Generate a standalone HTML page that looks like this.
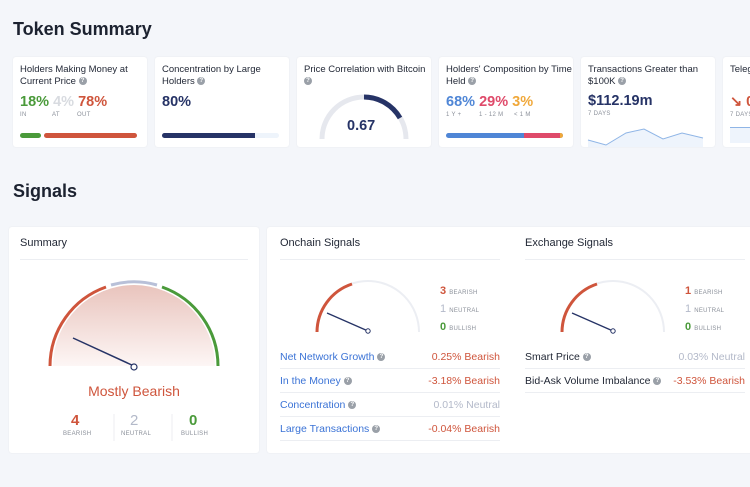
<!DOCTYPE html>
<html><head><meta charset="utf-8"><style>
*{box-sizing:border-box;margin:0;padding:0}
body{width:750px;height:487px;overflow:hidden;background:#f4f6fa;font-family:"Liberation Sans",sans-serif;color:#1f2533;position:relative}
.a{position:absolute}
h1{position:absolute;font-size:18px;font-weight:bold;color:#1c2230}
.card{position:absolute;background:#fff;border-radius:3px;box-shadow:0 0 2px rgba(0,0,0,.06)}
.t{position:absolute;left:7px;top:7px;font-size:9.5px;line-height:12px;color:#232937}
.q{display:inline-block;width:8px;height:8px;border-radius:50%;background:#9aa0a8;color:#fff;font-size:6px;line-height:8px;text-align:center;font-weight:bold;vertical-align:middle}
.big{position:absolute;font-size:14.5px;font-weight:bold}
.sm{position:absolute;font-size:6px;color:#8b909a;letter-spacing:.3px}
.row{position:absolute;height:24px;border-bottom:1px solid #eceef2;font-size:10.5px;line-height:24px}
.row .l{position:absolute;left:0}
.row .r{position:absolute;right:0}
.blue{color:#3b73d6}.red{color:#cf553c}.gr{color:#b3b9c9}.grn{color:#4a9a3a}
</style></head><body>
<h1 style="left:13px;top:19px">Token Summary</h1>
<h1 style="left:13px;top:181px">Signals</h1>

<div class="card" style="left:13px;top:57px;width:134px;height:90px">
<div class="t">Holders Making Money at<br>Current Price <span class="q">?</span></div>
<div class="big" style="left:7px;top:37px"><span class="grn">18%</span> <span style="color:#d8dbe0">4%</span> <span class="red">78%</span></div>
<div class="sm" style="left:7px;top:55px">IN</div><div class="sm" style="left:39px;top:55px">AT</div><div class="sm" style="left:64px;top:55px">OUT</div>
<div class="a" style="left:7px;top:76px;width:21px;height:5px;background:#4a9a3a;border-radius:3px"></div>
<div class="a" style="left:31px;top:76px;width:93px;height:5px;background:#cf553c;border-radius:3px"></div>
</div>

<div class="card" style="left:155px;top:57px;width:134px;height:90px">
<div class="t">Concentration by Large<br>Holders <span class="q">?</span></div>
<div class="big" style="left:7px;top:37px;color:#263366">80%</div>
<div class="a" style="left:7px;top:76px;width:117px;height:5px;background:#eef4fb;border-radius:3px"></div>
<div class="a" style="left:7px;top:76px;width:93px;height:5px;background:#263366;border-radius:3px 0 0 3px"></div>
</div>

<div class="card" style="left:297px;top:57px;width:134px;height:90px">
<div class="t">Price Correlation with Bitcoin<br><span class="q">?</span></div>
<svg class="a" style="left:0;top:0" width="134" height="90"><path d="M25 82 A42 42 0 0 1 109 82" fill="none" stroke="#e6e8ee" stroke-width="5"/><path d="M67 40 A42 42 0 0 1 103 61" fill="none" stroke="#263366" stroke-width="5"/></svg>
<div class="big" style="left:50px;top:61px;color:#263366">0.67</div>
</div>

<div class="card" style="left:439px;top:57px;width:134px;height:90px">
<div class="t">Holders' Composition by Time<br>Held <span class="q">?</span></div>
<div class="big" style="left:7px;top:37px"><span style="color:#4f86d6">68%</span> <span style="color:#df4a6a">29%</span> <span style="color:#f0a83a">3%</span></div>
<div class="sm" style="left:7px;top:55px">1 Y +</div><div class="sm" style="left:40px;top:55px">1 - 12 M</div><div class="sm" style="left:75px;top:55px">&lt; 1 M</div>
<div class="a" style="left:7px;top:76px;width:117px;height:5px;background:#4f86d6;border-radius:3px"></div>
<div class="a" style="left:85px;top:76px;width:37px;height:5px;background:#df4a6a"></div>
<div class="a" style="left:121px;top:76px;width:3px;height:5px;background:#f0a83a;border-radius:0 3px 3px 0"></div>
</div>

<div class="card" style="left:581px;top:57px;width:134px;height:90px">
<div class="t">Transactions Greater than<br>$100K <span class="q">?</span></div>
<div class="big" style="left:7px;top:36px;color:#263366">$112.19m</div>
<div class="sm" style="left:7px;top:54px">7 DAYS</div>
<svg class="a" style="left:0;top:0" width="134" height="90"><path d="M7 83 L25 88 L45 76 L63 72 L82 82 L101 76 L122 81 L122 90 L7 90Z" fill="#eef4fc"/><path d="M7 83 L25 88 L45 76 L63 72 L82 82 L101 76 L122 81" fill="none" stroke="#8fb5e6" stroke-width="1"/></svg>
</div>

<div class="card" style="left:723px;top:57px;width:40px;height:90px">
<div class="t">Telegram</div>
<div class="big red" style="left:7px;top:37px">↘ 0</div>
<div class="sm" style="left:7px;top:55px">7 DAYS</div>
<div class="a" style="left:7px;top:70px;width:30px;height:16px;background:#eef4fc;border-top:1px solid #8fb5e6"></div>
</div>

<div class="card" style="left:9px;top:227px;width:250px;height:226px">
<div class="a" style="left:11px;top:10px;font-size:11px">Summary</div>
<div class="a" style="left:11px;top:32px;width:228px;height:1px;background:#eceef2"></div>
<svg class="a" style="left:0;top:0" width="250" height="226">
<defs><linearGradient id="g" x1="0" y1="0" x2="0" y2="1"><stop offset="0" stop-color="#e9c4bd"/><stop offset="1" stop-color="#fdf6f5"/></linearGradient></defs>
<path d="M44 139 A81 81 0 0 1 206 139Z" fill="url(#g)"/>
<path d="M41 139 A84 84 0 0 1 97 60" fill="none" stroke="#cf553c" stroke-width="3"/>
<path d="M102 58 A84 84 0 0 1 148 58" fill="none" stroke="#b8c0d8" stroke-width="3"/>
<path d="M153 60 A84 84 0 0 1 209 139" fill="none" stroke="#4a9a3a" stroke-width="3"/>
<line x1="64" y1="111" x2="125" y2="139" stroke="#263366" stroke-width="1.5"/>
<circle cx="125" cy="140" r="3" fill="#fff" stroke="#263366" stroke-width="1.2"/>
<line x1="105" y1="187" x2="105" y2="214" stroke="#eceef2"/><line x1="163" y1="187" x2="163" y2="214" stroke="#eceef2"/>
</svg>
<div class="a red" style="left:0;width:250px;text-align:center;top:156px;font-size:14px">Mostly Bearish</div>
<div class="a red" style="left:62px;top:185px;font-size:15px;font-weight:bold">4</div>
<div class="sm" style="left:54px;top:204px">BEARISH</div>
<div class="a gr" style="left:121px;top:185px;font-size:15px">2</div>
<div class="sm" style="left:112px;top:204px">NEUTRAL</div>
<div class="a grn" style="left:180px;top:185px;font-size:15px;font-weight:bold">0</div>
<div class="sm" style="left:172px;top:204px">BULLISH</div>
</div>

<div class="card" style="left:267px;top:227px;width:490px;height:226px">
<div class="a" style="left:13px;top:10px;font-size:11px">Onchain Signals</div>
<div class="a" style="left:13px;top:32px;width:220px;height:1px;background:#eceef2"></div>
<div class="a" style="left:258px;top:10px;font-size:11px">Exchange Signals</div>
<div class="a" style="left:258px;top:32px;width:220px;height:1px;background:#eceef2"></div>
<svg class="a" style="left:0;top:0" width="490" height="130">
<path d="M50 105 A51 51 0 0 1 152 105" fill="none" stroke="#eceef3" stroke-width="2"/>
<path d="M50 105 A51 51 0 0 1 85 57" fill="none" stroke="#cf553c" stroke-width="3"/>
<line x1="60" y1="86" x2="101" y2="104" stroke="#263366" stroke-width="1.3"/><circle cx="101" cy="104" r="2.2" fill="#fff" stroke="#263366"/>
<path d="M295 105 A51 51 0 0 1 397 105" fill="none" stroke="#eceef3" stroke-width="2"/>
<path d="M295 105 A51 51 0 0 1 330 57" fill="none" stroke="#cf553c" stroke-width="3"/>
<line x1="305" y1="86" x2="346" y2="104" stroke="#263366" stroke-width="1.3"/><circle cx="346" cy="104" r="2.2" fill="#fff" stroke="#263366"/>
</svg>
<div class="a" style="left:173px;top:56px;font-size:11px;line-height:16px">
<div><b class="red">3</b> <span class="sm" style="position:static">BEARISH</span></div>
<div><span class="gr">1</span> <span class="sm" style="position:static">NEUTRAL</span></div>
<div><b class="grn">0</b> <span class="sm" style="position:static">BULLISH</span></div></div>
<div class="a" style="left:418px;top:56px;font-size:11px;line-height:16px">
<div><b class="red">1</b> <span class="sm" style="position:static">BEARISH</span></div>
<div><span class="gr">1</span> <span class="sm" style="position:static">NEUTRAL</span></div>
<div><b class="grn">0</b> <span class="sm" style="position:static">BULLISH</span></div></div>
<div class="row" style="left:13px;top:118px;width:220px"><span class="l blue">Net Network Growth <span class="q">?</span></span><span class="r red">0.25% Bearish</span></div>
<div class="row" style="left:13px;top:142px;width:220px"><span class="l blue">In the Money <span class="q">?</span></span><span class="r red">-3.18% Bearish</span></div>
<div class="row" style="left:13px;top:166px;width:220px"><span class="l blue">Concentration <span class="q">?</span></span><span class="r gr">0.01% Neutral</span></div>
<div class="row" style="left:13px;top:190px;width:220px"><span class="l blue">Large Transactions <span class="q">?</span></span><span class="r red">-0.04% Bearish</span></div>
<div class="row" style="left:258px;top:118px;width:220px"><span class="l">Smart Price <span class="q">?</span></span><span class="r gr">0.03% Neutral</span></div>
<div class="row" style="left:258px;top:142px;width:220px"><span class="l">Bid-Ask Volume Imbalance <span class="q">?</span></span><span class="r red">-3.53% Bearish</span></div>
</div>
</body></html>
